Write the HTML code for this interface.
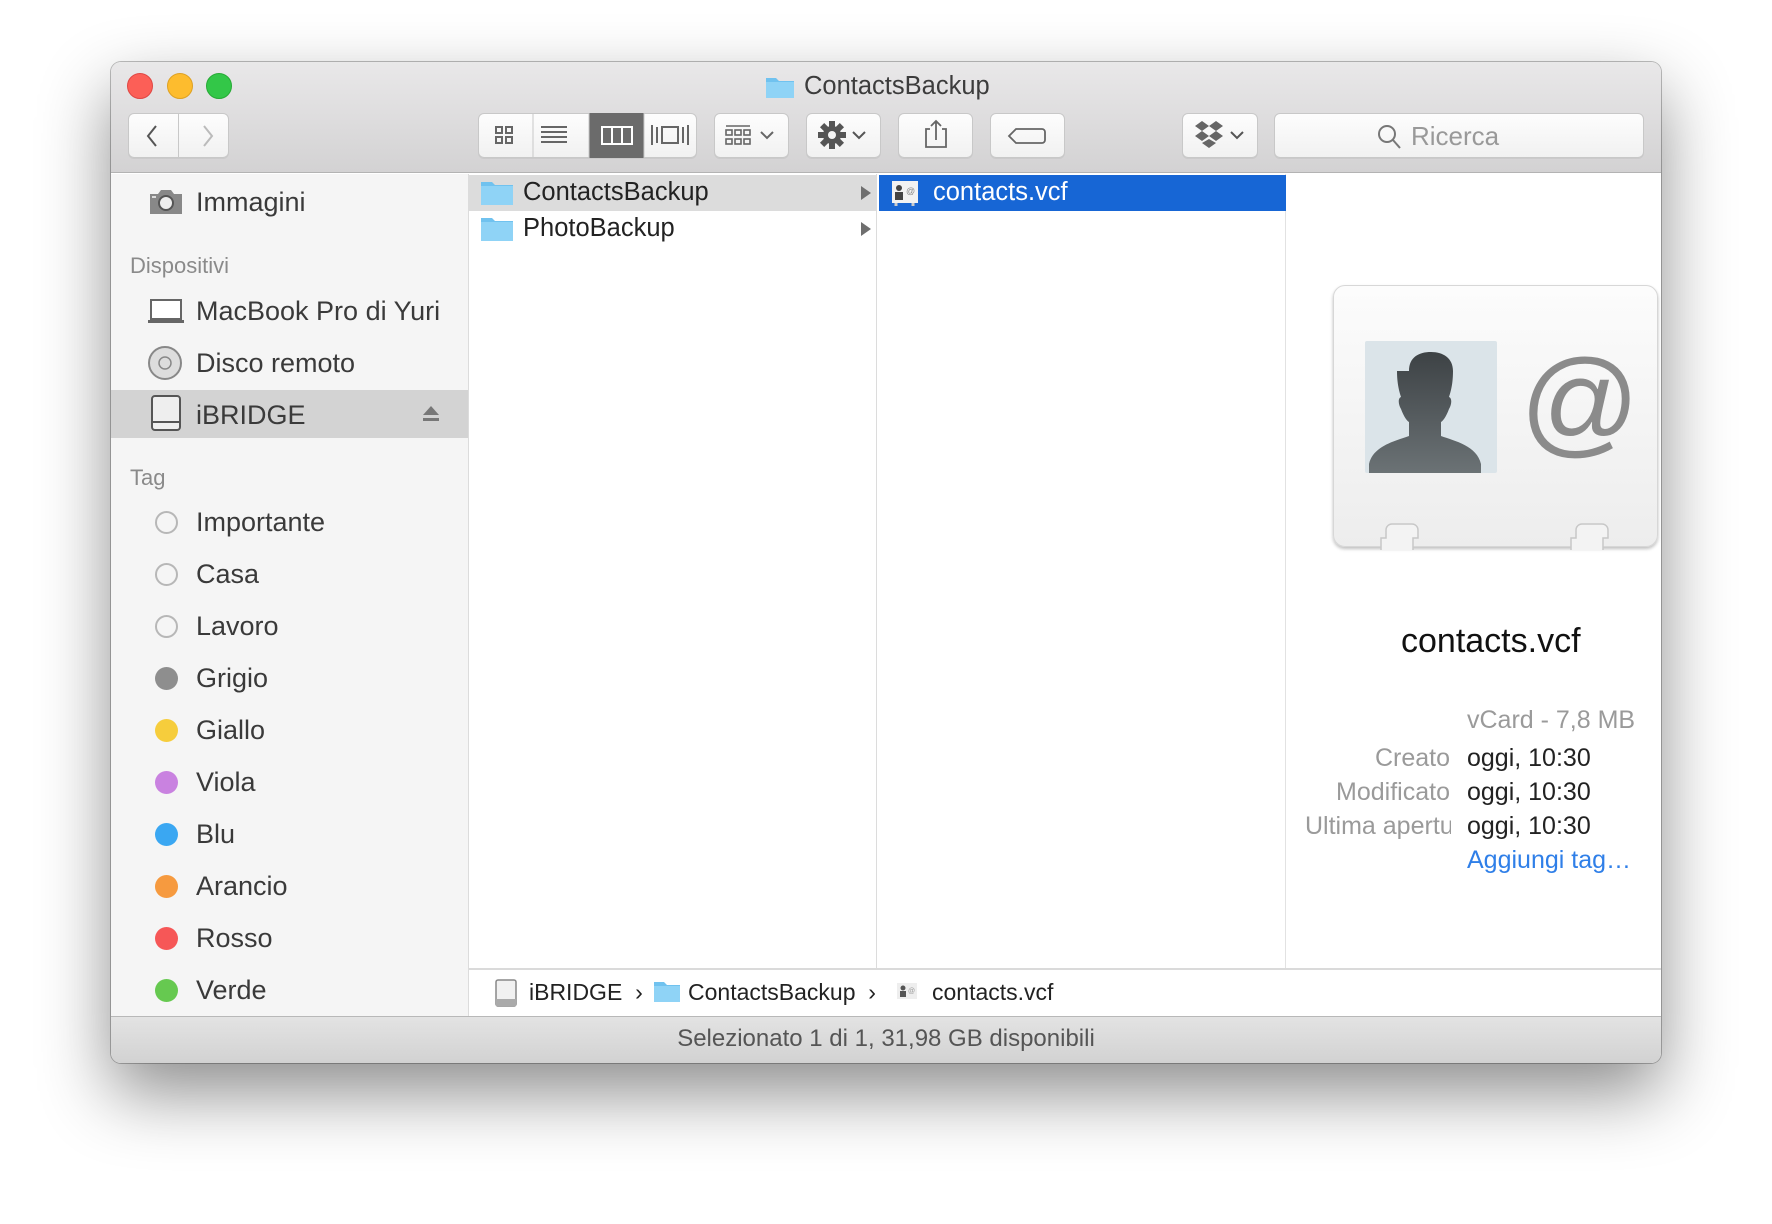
<!DOCTYPE html>
<html><head><meta charset="utf-8"><style>
*{margin:0;padding:0;box-sizing:border-box}
body{width:1772px;height:1224px;background:#fff;position:relative;overflow:hidden;font-family:"Liberation Sans","DejaVu Sans",sans-serif}
.a{position:absolute}
#win{left:111px;top:62px;width:1550px;height:1001px;border-radius:10px;background:#fff;box-shadow:0 30px 70px rgba(0,0,0,.45),0 0 0 1px rgba(0,0,0,.25);overflow:hidden}
#tb{left:0;top:0;width:1550px;height:111px;background:linear-gradient(#e9e8e9,#d3d2d3);border-bottom:1px solid #b3b3b3}
.tl{width:26px;height:26px;border-radius:50%;top:11px}
.btn{height:45px;top:51px;background:linear-gradient(#fdfdfd,#f1f1f1);border:1px solid #c8c8c8;border-radius:6px;box-shadow:0 1px 0 rgba(0,0,0,.05)}
.side{left:0;top:112px;width:358px;height:842px;background:#f5f5f5;border-right:1px solid #dcdcdc}
.si{left:0;font-size:27px;color:#3a3a3a;height:40px;line-height:40px;width:358px}
.si span{position:absolute;left:85px}
.hd{font-size:22px;color:#8a8a8a;left:19px;height:30px;line-height:30px}
.dot{position:absolute;left:44px;top:9px;width:23px;height:23px;border-radius:50%}
.col{font-size:25.5px;color:#222}
.lbl{font-size:25px;color:#9a9a9a;text-align:right;width:220px;left:1119px}
.val{font-size:25px;color:#222;left:1356px}
</style></head><body>
<div id="win" class="a">
 <div id="tb" class="a">
  <div class="a tl" style="left:16px;background:#fc5f57;border:1px solid #df4744"></div>
  <div class="a tl" style="left:56px;background:#fdbc2e;border:1px solid #dea123"></div>
  <div class="a tl" style="left:95px;background:#33c748;border:1px solid #27aa35"></div>
  <svg class="a" style="left:654px;top:13px" width="30" height="24"><path d="M1 3h10l3 3h15v17H1z" fill="#70c2ef"/><rect x="1" y="7" width="28" height="16" fill="#8fd3f6"/></svg>
  <div class="a" style="left:693px;top:10px;font-size:25.5px;color:#3c3c3c">ContactsBackup</div>
  <div class="a btn" style="left:17px;width:101px"></div>
  <div class="a" style="left:67px;top:52px;width:1px;height:43px;background:#c8c8c8"></div>
  <svg class="a" style="left:30px;top:60px" width="80" height="28"><path d="M15 4L7 14l8 10" stroke="#555" stroke-width="2" fill="none"/><path d="M63 4l8 10-8 10" stroke="#bbb" stroke-width="2" fill="none"/></svg>
  <div class="a btn" style="left:367px;width:219px"></div>
  <div class="a" style="left:478px;top:51px;width:55px;height:45px;background:#6b6b6b"></div>
  <svg class="a" style="left:367px;top:51px" width="219" height="45"><g fill="none" stroke="#666" stroke-width="2"><rect x="18" y="14" width="6" height="6"/><rect x="28" y="14" width="6" height="6"/><rect x="18" y="24" width="6" height="6"/><rect x="28" y="24" width="6" height="6"/><path d="M63 14h26M63 19h26M63 24h26M63 29h26"/><path d="M174 12v20M179 14v16M184 14h16v16h-16zM205 14v16M210 12v20"/></g><g fill="none" stroke="#fff" stroke-width="2"><rect x="124" y="14" width="30" height="17"/><path d="M134 14v17M144 14v17"/></g><path d="M55 0v45M111 0v45M166 0v45" stroke="#c8c8c8"/></svg>
  <div class="a btn" style="left:603px;width:75px"></div>
  <svg class="a" style="left:603px;top:51px" width="75" height="45"><g fill="none" stroke="#666" stroke-width="1.6"><path d="M12 13h24"/><rect x="12" y="17" width="6" height="5"/><rect x="21" y="17" width="6" height="5"/><rect x="30" y="17" width="6" height="5"/><rect x="12" y="26" width="6" height="5"/><rect x="21" y="26" width="6" height="5"/><rect x="30" y="26" width="6" height="5"/><path d="M47 19l6 6 6-6" stroke-width="2"/></g></svg>
  <div class="a btn" style="left:695px;width:75px"></div>
  <svg class="a" style="left:695px;top:51px" width="75" height="45"><g transform="translate(26 22)" fill="#555"><circle r="9"/><g><rect x="-3" y="-14" width="6" height="28"/><rect x="-3" y="-14" width="6" height="28" transform="rotate(45)"/><rect x="-3" y="-14" width="6" height="28" transform="rotate(90)"/><rect x="-3" y="-14" width="6" height="28" transform="rotate(135)"/></g><circle r="4" fill="#f5f5f5"/></g><path d="M47 19l6 6 6-6" stroke="#555" stroke-width="2" fill="none"/></svg>
  <div class="a btn" style="left:787px;width:75px"></div>
  <svg class="a" style="left:787px;top:51px" width="75" height="45"><g fill="none" stroke="#666" stroke-width="1.8"><path d="M32 16h-4v18h20V16h-4M38 8v19M33 13l5-5 5 5"/></g></svg>
  <div class="a btn" style="left:879px;width:75px"></div>
  <svg class="a" style="left:879px;top:51px" width="75" height="45"><path d="M26 16h26a3 3 0 0 1 3 3v8a3 3 0 0 1-3 3H26l-7-7z" fill="none" stroke="#666" stroke-width="1.8"/></svg>
  <div class="a btn" style="left:1071px;width:76px"></div>
  <svg class="a" style="left:1071px;top:51px" width="76" height="45"><g fill="#666"><path d="M13 13l7-5 7 5-7 5zM27 13l7-5 7 5-7 5zM13 23l7-5 7 5-7 5zM27 23l7-5 7 5-7 5zM20 30l7-4 7 4-7 5z"/></g><path d="M49 19l6 6 6-6" stroke="#555" stroke-width="2" fill="none"/></svg>
  <div class="a btn" style="left:1163px;width:370px"></div>
  <svg class="a" style="left:1265px;top:60px" width="28" height="30"><circle cx="11" cy="12" r="8" stroke="#777" stroke-width="2" fill="none"/><path d="M17 18l7 8" stroke="#777" stroke-width="2"/></svg>
  <div class="a" style="left:1300px;top:59px;font-size:26px;color:#999">Ricerca</div>
 </div>

 <div class="a side">
  <svg class="a" style="left:37px;top:14px" width="36" height="28"><path d="M2 6h8l3-4h10l3 4h8v20H2z" fill="#888"/><circle cx="18" cy="15" r="7" fill="#eee" stroke="#555" stroke-width="2"/><rect x="4" y="8" width="4" height="2" fill="#ddd"/></svg>
  <div class="a si" style="top:8px"><span>Immagini</span></div>
  <div class="a hd" style="top:77px">Dispositivi</div>
  <svg class="a" style="left:37px;top:124px" width="36" height="26"><rect x="3" y="2" width="30" height="19" fill="#fff" stroke="#666" stroke-width="2"/><path d="M0 22h36v3H0z" fill="#666"/></svg>
  <div class="a si" style="top:117px"><span>MacBook Pro di Yuri</span></div>
  <svg class="a" style="left:36px;top:171px" width="36" height="36"><circle cx="18" cy="18" r="16" fill="#ddd" stroke="#888" stroke-width="2"/><circle cx="18" cy="18" r="6" fill="none" stroke="#888" stroke-width="1.5"/></svg>
  <div class="a si" style="top:169px"><span>Disco remoto</span></div>
  <div class="a" style="left:0;top:216px;width:357px;height:48px;background:#d3d3d3"></div>
  <svg class="a" style="left:38px;top:220px" width="34" height="40"><rect x="3" y="2" width="28" height="34" rx="3" fill="#eee" stroke="#555" stroke-width="2"/><path d="M3 28h28" stroke="#555" stroke-width="2"/></svg>
  <div class="a si" style="top:221px"><span>iBRIDGE</span></div>
  <svg class="a" style="left:310px;top:230px" width="20" height="20"><path d="M10 2l8 9H2z" fill="#777"/><rect x="2" y="14" width="16" height="3" fill="#777"/></svg>
  <div class="a hd" style="top:289px">Tag</div>
  <div class="a si" style="top:328px"><i class="dot" style="border:2px solid #b7b7b7"></i><span>Importante</span></div>
  <div class="a si" style="top:380px"><i class="dot" style="border:2px solid #b7b7b7"></i><span>Casa</span></div>
  <div class="a si" style="top:432px"><i class="dot" style="border:2px solid #b7b7b7"></i><span>Lavoro</span></div>
  <div class="a si" style="top:484px"><i class="dot" style="background:#8e8e8e"></i><span>Grigio</span></div>
  <div class="a si" style="top:536px"><i class="dot" style="background:#f6cd3c"></i><span>Giallo</span></div>
  <div class="a si" style="top:588px"><i class="dot" style="background:#c982e0"></i><span>Viola</span></div>
  <div class="a si" style="top:640px"><i class="dot" style="background:#3aa7f2"></i><span>Blu</span></div>
  <div class="a si" style="top:692px"><i class="dot" style="background:#f69a3f"></i><span>Arancio</span></div>
  <div class="a si" style="top:744px"><i class="dot" style="background:#f65757"></i><span>Rosso</span></div>
  <div class="a si" style="top:796px"><i class="dot" style="background:#66c950"></i><span>Verde</span></div>
 </div>

 <div class="a" style="left:358px;top:112px;width:408px;height:794px;border-right:1px solid #dcdcdc"></div>
 <div class="a" style="left:766px;top:112px;width:409px;height:794px;border-right:1px solid #e2e2e2"></div>
 <div class="a" style="left:358px;top:113px;width:407px;height:36px;background:#dcdcdc"></div>
 <svg class="a" style="left:369px;top:118px" width="34" height="26"><path d="M1 2h11l3 3h18v20H1z" fill="#70c2ef"/><rect x="1" y="6" width="32" height="19" fill="#8fd3f6"/></svg>
 <div class="a col" style="left:412px;top:116px">ContactsBackup</div>
 <svg class="a" style="left:749px;top:123px" width="12" height="16"><path d="M1 1l10 7-10 7z" fill="#6f6f6f"/></svg>
 <svg class="a" style="left:369px;top:154px" width="34" height="26"><path d="M1 2h11l3 3h18v20H1z" fill="#70c2ef"/><rect x="1" y="6" width="32" height="19" fill="#8fd3f6"/></svg>
 <div class="a col" style="left:412px;top:152px">PhotoBackup</div>
 <svg class="a" style="left:749px;top:159px" width="12" height="16"><path d="M1 1l10 7-10 7z" fill="#6f6f6f"/></svg>
 <div class="a" style="left:768px;top:113px;width:407px;height:36px;background:#1766d5"></div>
 <svg class="a" style="left:780px;top:118px" width="28" height="26"><rect x="1" y="1" width="26" height="22" fill="#f2f2f2"/><circle cx="8" cy="8" r="3" fill="#444"/><rect x="4" y="12" width="8" height="8" fill="#444"/><text x="15" y="14" font-size="9" fill="#888" font-family="Liberation Sans">@</text><path d="M5 23v3M22 23v3" stroke="#ccc" stroke-width="3"/></svg>
 <div class="a col" style="left:822px;top:116px;color:#fff">contacts.vcf</div>

 <div class="a" style="left:1222px;top:223px;width:325px;height:262px;background:linear-gradient(#fcfcfc,#ededed);border:1px solid #d7d7d7;border-radius:12px;box-shadow:0 2px 3px rgba(0,0,0,.25)"></div>
 <div class="a" style="left:1254px;top:279px;width:132px;height:132px;background:#dbe4e9;border-radius:2px;overflow:hidden">
  <svg width="132" height="132"><defs><linearGradient id="g" x1="0" y1="0" x2="0" y2="1"><stop offset="0" stop-color="#3d4245"/><stop offset="1" stop-color="#6b7275"/></linearGradient></defs><path d="M44 30c0-14 10-19 22-19s22 6 22 19c0 12-2 20-4 26 3 1 3 7 0 12-3 8-6 12-8 13v14c14 5 36 10 40 28v9H4v-9c4-18 26-23 40-28V81c-2-1-5-5-8-13-3-5-3-11 0-12-2-6-4-14-4-26z" fill="url(#g)"/></svg>
 </div>
 <div class="a" style="left:1409px;top:285px;font-size:118px;color:#8b8b8b;line-height:110px;font-family:'Liberation Sans',sans-serif">@</div>
 <svg class="a" style="left:1260px;top:450px" width="260" height="40"><g fill="#f3f3f3" stroke="#c8c8c8" stroke-width="1.5"><path d="M10 38V26h5v-8a6 6 0 0 1 6-6h20a6 6 0 0 1 6 6v8h-5v12"/><path d="M200 38V26h5v-8a6 6 0 0 1 6-6h20a6 6 0 0 1 6 6v8h-5v12"/></g></svg>

 <div class="a" style="left:1290px;top:560px;font-size:34px;color:#111">contacts.vcf</div>
 <div class="a" style="left:1356px;top:644px;font-size:25px;color:#9a9a9a">vCard - 7,8 MB</div>
 <div class="a lbl" style="top:682px">Creato</div><div class="a val" style="top:682px">oggi, 10:30</div>
 <div class="a lbl" style="top:716px">Modificato</div><div class="a val" style="top:716px">oggi, 10:30</div>
 <div class="a" style="left:1194px;top:750px;width:146px;overflow:hidden;white-space:nowrap;font-size:25px;color:#9a9a9a">Ultima apertura</div><div class="a val" style="top:750px">oggi, 10:30</div>
 <div class="a" style="left:1356px;top:784px;font-size:25px;color:#2f7fe8">Aggiungi tag…</div>

 <div class="a" style="left:358px;top:906px;width:1192px;height:48px;background:#fff;border-top:2px solid #dadada"></div>
 <svg class="a" style="left:383px;top:916px" width="24" height="30"><rect x="2" y="2" width="20" height="26" rx="2" fill="#f1f1f1" stroke="#888" stroke-width="1.5"/><rect x="2" y="21" width="20" height="7" fill="#aaa"/></svg>
 <div class="a" style="left:418px;top:917px;font-size:23px;color:#222">iBRIDGE&nbsp;&nbsp;›</div>
 <svg class="a" style="left:542px;top:919px" width="28" height="22"><path d="M1 1h10l3 3h13v17H1z" fill="#70c2ef"/><rect x="1" y="5" width="26" height="16" fill="#8fd3f6"/></svg>
 <div class="a" style="left:577px;top:917px;font-size:23px;color:#222">ContactsBackup&nbsp;&nbsp;›</div>
 <svg class="a" style="left:785px;top:920px" width="22" height="20"><rect x="1" y="1" width="20" height="16" fill="#eee"/><circle cx="7" cy="6" r="2.5" fill="#555"/><rect x="4" y="9" width="6" height="6" fill="#555"/><text x="12" y="11" font-size="7" fill="#999">@</text></svg>
 <div class="a" style="left:821px;top:917px;font-size:23px;color:#222">contacts.vcf</div>

 <div class="a" style="left:0;top:954px;width:1550px;height:47px;background:linear-gradient(#e3e3e3,#d2d2d2);border-top:1px solid #b8b8b8"></div>
 <div class="a" style="left:0;top:963px;width:1550px;text-align:center;font-size:24px;color:#555">Selezionato 1 di 1, 31,98 GB disponibili</div>
</div>
</body></html>
